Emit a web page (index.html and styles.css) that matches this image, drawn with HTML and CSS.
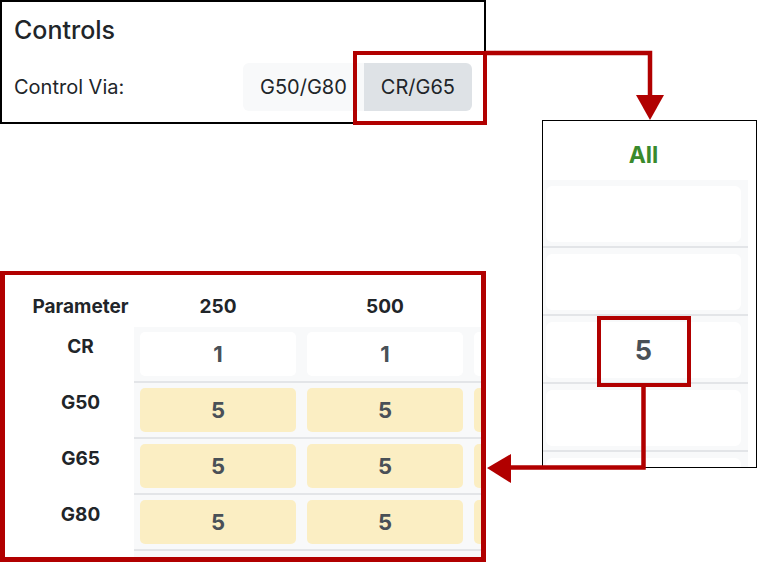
FILE: index.html
```html
<!DOCTYPE html>
<html>
<head>
<meta charset="utf-8">
<link rel="stylesheet" href="styles.css">
</head>
<body>
<div class="canvas">
  <section class="shot shot-controls">
    <h5 class="title">Controls</h5>
    <div class="via">
      <span class="via-label">Control Via:</span>
      <div class="btn-group">
        <button class="btn">G50/G80</button>
        <button class="btn active">CR/G65</button>
      </div>
    </div>
  </section>

  <section class="shot shot-all">
    <div class="all-head">All</div>
    <div class="arow"><div class="acell"></div></div>
    <div class="arow"><div class="acell"></div></div>
    <div class="arow"><div class="acell">5</div></div>
    <div class="arow"><div class="acell"></div></div>
    <div class="arow"><div class="acell"></div></div>
  </section>

  <section class="shot shot-table">
    <div class="trow thead">
      <div class="lab">Parameter</div>
      <div class="th">250</div>
      <div class="th">500</div>
      <div class="th"></div>
    </div>
    <div class="trow">
      <div class="lab">CR</div>
      <div class="td"><div class="cell">1</div></div>
      <div class="td"><div class="cell">1</div></div>
      <div class="td"><div class="cell"></div></div>
    </div>
    <div class="trow">
      <div class="lab">G50</div>
      <div class="td"><div class="cell warn">5</div></div>
      <div class="td"><div class="cell warn">5</div></div>
      <div class="td"><div class="cell warn"></div></div>
    </div>
    <div class="trow">
      <div class="lab">G65</div>
      <div class="td"><div class="cell warn">5</div></div>
      <div class="td"><div class="cell warn">5</div></div>
      <div class="td"><div class="cell warn"></div></div>
    </div>
    <div class="trow">
      <div class="lab">G80</div>
      <div class="td"><div class="cell warn">5</div></div>
      <div class="td"><div class="cell warn">5</div></div>
      <div class="td"><div class="cell warn"></div></div>
    </div>
    <div class="trow tail">
      <div class="lab"></div>
      <div class="td"></div>
      <div class="td"></div>
      <div class="td"></div>
    </div>
  </section>

  <svg class="annot" width="757" height="562" viewBox="0 0 757 562">
    <rect x="355" y="53" width="130" height="70" fill="none" stroke="#b10000" stroke-width="4"/>
    <polyline points="485,53 650,53 650,97" fill="none" stroke="#b10000" stroke-width="4.5"/>
    <polygon points="636,95 664,95 650,120" fill="#b10000"/>
    <rect x="599" y="318" width="90" height="67" fill="none" stroke="#b10000" stroke-width="4"/>
    <polyline points="643.5,385 643.5,467.5 509,467.5" fill="none" stroke="#b10000" stroke-width="4.5"/>
    <polygon points="511,454 511,483 487,468" fill="#b10000"/>
  </svg>
</div>
</body>
</html>
```

FILE: styles.css
```css
* { box-sizing: border-box; }

html, body {
  margin: 0;
  padding: 0;
  background: #fff;
}

body {
  font-family: "Inter", "Liberation Sans", sans-serif;
  color: #212529;
}

.canvas {
  position: relative;
  width: 757px;
  height: 562px;
  overflow: hidden;
}

.shot {
  position: absolute;
  background: #fff;
  overflow: hidden;
}

/* ---------- Controls panel ---------- */
.shot-controls {
  left: 0;
  top: 0;
  width: 486px;
  height: 124px;
  border: 2px solid #000;
  padding: 14px 12px 0 12px;
  display: flex;
  flex-direction: column;
}

.title {
  margin: 0;
  font-size: 25px;
  line-height: 29px;
  font-weight: 500;
  color: #212529;
}

.via {
  margin-top: 18px;
  display: grid;
  grid-template-columns: 229px auto;
  align-items: center;
}

.via-label {
  font-size: 20px;
  line-height: 30px;
  color: #212529;
}

.btn-group {
  display: flex;
}

.btn {
  font-family: inherit;
  font-size: 20px;
  line-height: 30px;
  height: 48px;
  padding: 0 17px;
  border: 0;
  background: #f8f9fa;
  color: #212529;
  margin: 0;
}

.btn:first-child { border-radius: 6px 0 0 6px; }
.btn:last-child { border-radius: 0 6px 6px 0; }

.btn.active {
  background: #dee2e6;
}

/* ---------- "All" column panel ---------- */
.shot-all {
  left: 542px;
  top: 120px;
  width: 215px;
  height: 348px;
  border: 1px solid #000;
  display: flex;
  flex-direction: column;
}

.all-head {
  flex: none;
  width: 205px;
  height: 59px;
  padding: 20px 7px 0 3px;
  text-align: center;
  font-size: 23px;
  line-height: 28px;
  font-weight: 700;
  color: #3a8a2c;
}

.arow {
  flex: none;
  width: 205px;
  padding: 6px 7px 4px 3px;
  background: #f8f9fa;
  border-bottom: 2px solid #e3e5e8;
}

.acell {
  height: 56px;
  background: #fff;
  border-radius: 6px;
  display: flex;
  align-items: center;
  justify-content: center;
  font-size: 27px;
  font-weight: 700;
  color: #495057;
}

/* ---------- parameter table panel ---------- */
.shot-table {
  left: 0;
  top: 271px;
  width: 486px;
  height: 291px;
  border: 5px solid #b10000;
  border-top-width: 4px;
  display: flex;
  flex-direction: column;
}

.trow {
  display: flex;
  flex: none;
}

.lab {
  flex: none;
  width: 129px;
  padding: 8px 0 0 22px;
  text-align: center;
  font-size: 19px;
  line-height: 23px;
  font-weight: 700;
  color: #212529;
}

.thead {
  height: 52px;
}

.thead .lab,
.th {
  padding-top: 20px;
}

.th {
  flex: none;
  width: 167px;
  padding-left: 6px;
  padding-right: 5px;
  text-align: center;
  font-size: 19px;
  line-height: 23px;
  font-weight: 700;
  color: #212529;
}

.td {
  flex: none;
  width: 167px;
  padding: 5px 5px 5px 6px;
  background: #f8f9fa;
  border-bottom: 2px solid #e3e5e8;
}

.tail .td {
  height: 20px;
  border-bottom: 0;
}

.cell {
  height: 44px;
  background: #fff;
  border-radius: 5px;
  display: flex;
  align-items: center;
  justify-content: center;
  font-size: 22px;
  font-weight: 700;
  color: #495057;
}

.cell.warn {
  background: #fbeec3;
}

/* ---------- annotation overlay ---------- */
.annot {
  position: absolute;
  left: 0;
  top: 0;
  pointer-events: none;
}
```
